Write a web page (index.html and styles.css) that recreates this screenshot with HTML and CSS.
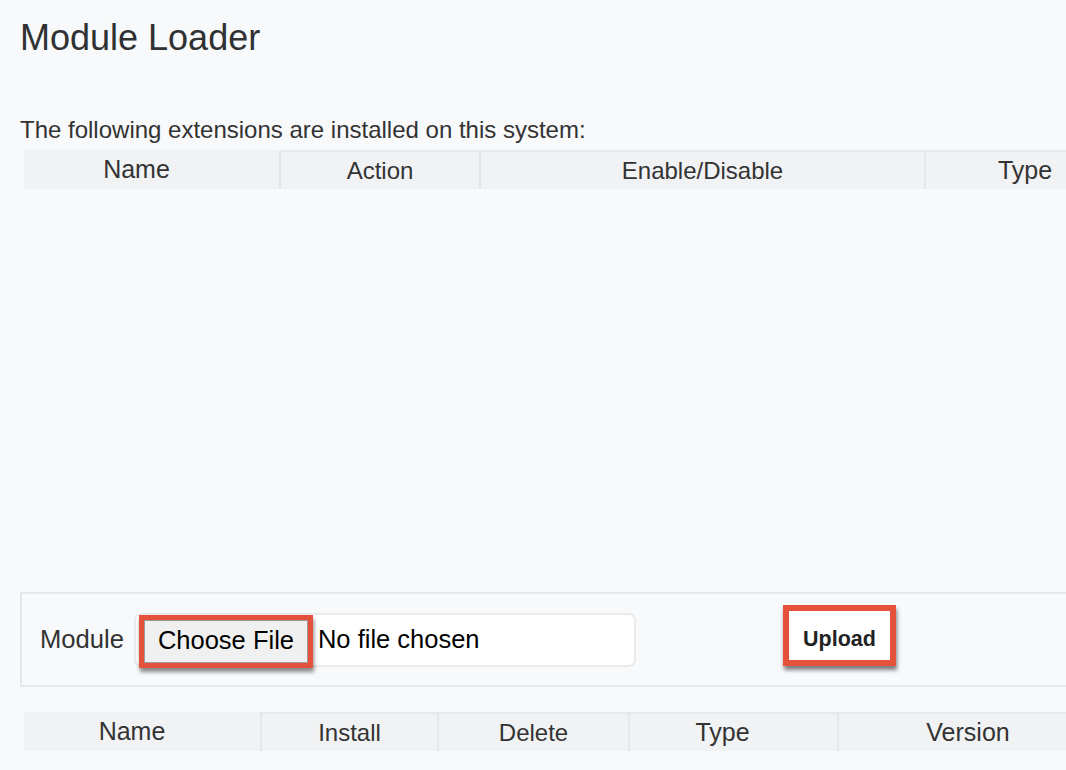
FILE: index.html
```html
<!DOCTYPE html>
<html lang="en">
<head>
<meta charset="utf-8">
<title>Module Loader</title>
<link rel="stylesheet" href="styles.css">
</head>
<body>
<div class="page">
  <h1 class="title">Module Loader</h1>
  <p class="intro">The following extensions are installed on this system:</p>
  <div class="thead installed">
    <div class="th th-name sortable">Name</div>
    <div class="th th-action">Action</div>
    <div class="th th-enable">Enable/Disable</div>
    <div class="th th-type sortable">Type</div>
  </div>

  <div class="upload-panel">
    <span class="label">Module</span>
    <div class="file-input">
      <span class="choose-btn">Choose File</span>
      <span class="file-name">No file chosen</span>
    </div>
    <span class="upload-btn">Upload</span>
  </div>

  <div class="thead packages">
    <div class="th p-name sortable">Name</div>
    <div class="th p-install">Install</div>
    <div class="th p-delete">Delete</div>
    <div class="th p-type sortable">Type</div>
    <div class="th p-version sortable">Version</div>
  </div>
</div>
</body>
</html>
```

FILE: styles.css
```css
* { box-sizing: border-box; }

html, body {
  margin: 0;
  padding: 0;
  background: #f8f9fb;
  overflow: hidden;
}

body {
  font-family: "Liberation Sans", Arial, Helvetica, sans-serif;
  color: #333333;
  width: 1066px;
  height: 770px;
}

.page {
  padding: 20px 0 0 20px;
  width: 1066px;
  overflow: hidden;
}

.title {
  margin: 0;
  font-size: 36px;
  line-height: 36px;
  font-weight: normal;
  color: #2f3133;
}

.intro {
  margin: 62px 0 0 0;
  font-size: 24px;
  line-height: 24px;
  color: #333;
}

.thead {
  display: flex;
  margin-left: 4px;
  height: 39px;
  background: #f1f2f4;
  flex-shrink: 0;
}

.installed { margin-top: 8px; width: 1200px; }
.packages { margin-top: 25px; width: 1200px; }

.th {
  flex: none;
  height: 39px;
  font-size: 24px;
  text-align: center;
  color: #333;
  border-left: 2px solid #e3e7e8;
  border-top: 2px solid #e6e9eb;
  line-height: 37px;
  white-space: nowrap;
}

.th.sortable { font-size: 25px; }

.th-name, .p-name {
  border-left: none;
  border-top: none;
  line-height: 39px;
}

.th-name { width: 255px; padding-right: 30px; }
.th-action { width: 200px; }
.th-enable { width: 445px; }
.th-type { width: 200px; }

.p-name { width: 236px; padding-right: 20px; }
.p-install { width: 177px; }
.p-delete { width: 191px; }
.p-type { width: 209px; padding-right: 22px; }
.p-version { width: 260px; }

.upload-panel {
  margin-top: 403px;
  height: 95px;
  width: 1100px;
  border: 2px solid #e3e8e8;
  display: flex;
  align-items: center;
  padding-left: 18px;
}

.label {
  font-size: 25.6px;
  color: #333;
  margin-right: 10px;
}

.file-input {
  width: 502px;
  height: 54px;
  background: #ffffff;
  border: 2px solid #e8eaec;
  border-radius: 7px;
  display: flex;
  align-items: flex-start;
  padding-left: 3px;
}

.choose-btn {
  width: 174px;
  height: 53px;
  background: #f0f0f0;
  border: 5px solid #e4523c;
  box-shadow: inset 0 0 0 1px #9a9a9a, 1px 4px 4px rgba(0, 0, 0, 0.45);
  font-size: 25.5px;
  line-height: 40px;
  color: #000;
  text-align: center;
}

.file-name {
  margin-left: 5px;
  font-size: 25.5px;
  line-height: 49px;
  color: #000;
}

.upload-btn {
  margin-left: 147px;
  margin-bottom: 8px;
  width: 113px;
  height: 61px;
  background: #ffffff;
  border: 6px solid #e4523c;
  box-shadow: 1px 4px 4px rgba(0, 0, 0, 0.5);
  font-size: 21.5px;
  font-weight: bold;
  padding-top: 8px;
  line-height: 41px;
  text-align: center;
  color: #222;
}
```
